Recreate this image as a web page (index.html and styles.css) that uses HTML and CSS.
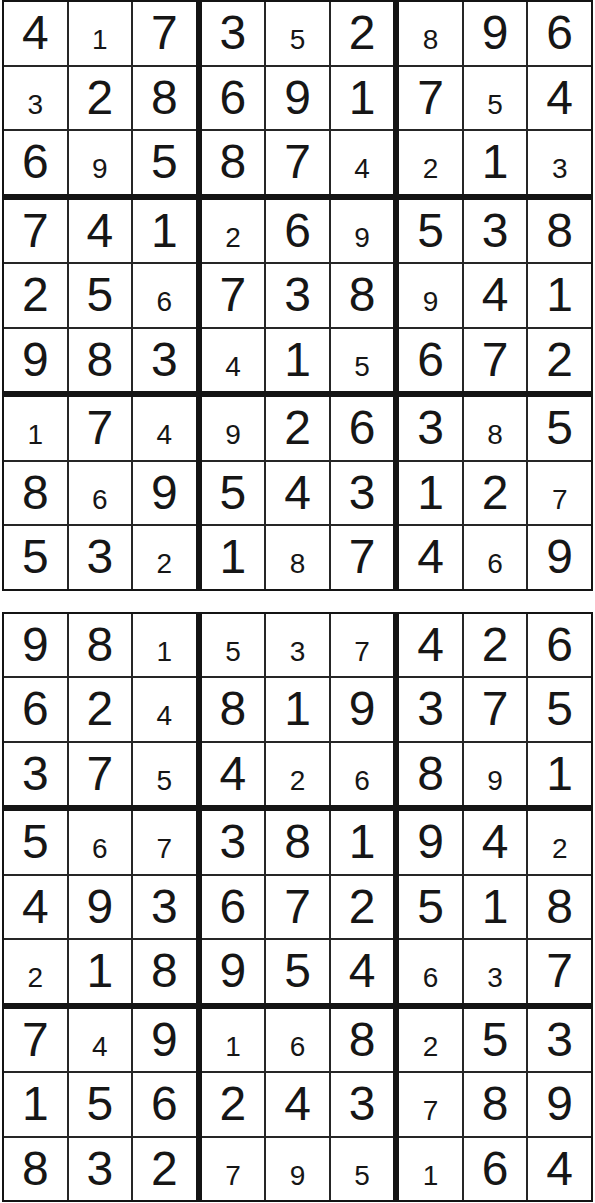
FILE: index.html
```html
<!DOCTYPE html>
<html lang="en">
<head>
  <meta charset="UTF-8" />
  <meta name="viewport" content="width=device-width, initial-scale=1.0"/>
  <title>Sudoku Solutions</title>
  <link rel="stylesheet" href="styles.css">
</head>
<body>
  <div class="page">
    <!-- puzzle 1 -->
    <div class="sudoku">
      <div class="box">
        <div class="cell">4</div><div class="cell"><span class="sm">1</span></div><div class="cell">7</div>
        <div class="cell"><span class="sm">3</span></div><div class="cell">2</div><div class="cell">8</div>
        <div class="cell">6</div><div class="cell"><span class="sm">9</span></div><div class="cell">5</div>
      </div>
      <div class="box">
        <div class="cell">3</div><div class="cell"><span class="sm">5</span></div><div class="cell">2</div>
        <div class="cell">6</div><div class="cell">9</div><div class="cell">1</div>
        <div class="cell">8</div><div class="cell">7</div><div class="cell"><span class="sm">4</span></div>
      </div>
      <div class="box">
        <div class="cell"><span class="sm">8</span></div><div class="cell">9</div><div class="cell">6</div>
        <div class="cell">7</div><div class="cell"><span class="sm">5</span></div><div class="cell">4</div>
        <div class="cell"><span class="sm">2</span></div><div class="cell">1</div><div class="cell"><span class="sm">3</span></div>
      </div>
      <div class="box">
        <div class="cell">7</div><div class="cell">4</div><div class="cell">1</div>
        <div class="cell">2</div><div class="cell">5</div><div class="cell"><span class="sm">6</span></div>
        <div class="cell">9</div><div class="cell">8</div><div class="cell">3</div>
      </div>
      <div class="box">
        <div class="cell"><span class="sm">2</span></div><div class="cell">6</div><div class="cell"><span class="sm">9</span></div>
        <div class="cell">7</div><div class="cell">3</div><div class="cell">8</div>
        <div class="cell"><span class="sm">4</span></div><div class="cell">1</div><div class="cell"><span class="sm">5</span></div>
      </div>
      <div class="box">
        <div class="cell">5</div><div class="cell">3</div><div class="cell">8</div>
        <div class="cell"><span class="sm">9</span></div><div class="cell">4</div><div class="cell">1</div>
        <div class="cell">6</div><div class="cell">7</div><div class="cell">2</div>
      </div>
      <div class="box">
        <div class="cell"><span class="sm">1</span></div><div class="cell">7</div><div class="cell"><span class="sm">4</span></div>
        <div class="cell">8</div><div class="cell"><span class="sm">6</span></div><div class="cell">9</div>
        <div class="cell">5</div><div class="cell">3</div><div class="cell"><span class="sm">2</span></div>
      </div>
      <div class="box">
        <div class="cell"><span class="sm">9</span></div><div class="cell">2</div><div class="cell">6</div>
        <div class="cell">5</div><div class="cell">4</div><div class="cell">3</div>
        <div class="cell">1</div><div class="cell"><span class="sm">8</span></div><div class="cell">7</div>
      </div>
      <div class="box">
        <div class="cell">3</div><div class="cell"><span class="sm">8</span></div><div class="cell">5</div>
        <div class="cell">1</div><div class="cell">2</div><div class="cell"><span class="sm">7</span></div>
        <div class="cell">4</div><div class="cell"><span class="sm">6</span></div><div class="cell">9</div>
      </div>
    </div>

    <!-- puzzle 2 -->
    <div class="sudoku second">
      <div class="box">
        <div class="cell">9</div><div class="cell">8</div><div class="cell"><span class="sm">1</span></div>
        <div class="cell">6</div><div class="cell">2</div><div class="cell"><span class="sm">4</span></div>
        <div class="cell">3</div><div class="cell">7</div><div class="cell"><span class="sm">5</span></div>
      </div>
      <div class="box">
        <div class="cell"><span class="sm">5</span></div><div class="cell"><span class="sm">3</span></div><div class="cell"><span class="sm">7</span></div>
        <div class="cell">8</div><div class="cell">1</div><div class="cell">9</div>
        <div class="cell">4</div><div class="cell"><span class="sm">2</span></div><div class="cell"><span class="sm">6</span></div>
      </div>
      <div class="box">
        <div class="cell">4</div><div class="cell">2</div><div class="cell">6</div>
        <div class="cell">3</div><div class="cell">7</div><div class="cell">5</div>
        <div class="cell">8</div><div class="cell"><span class="sm">9</span></div><div class="cell">1</div>
      </div>
      <div class="box">
        <div class="cell">5</div><div class="cell"><span class="sm">6</span></div><div class="cell"><span class="sm">7</span></div>
        <div class="cell">4</div><div class="cell">9</div><div class="cell">3</div>
        <div class="cell"><span class="sm">2</span></div><div class="cell">1</div><div class="cell">8</div>
      </div>
      <div class="box">
        <div class="cell">3</div><div class="cell">8</div><div class="cell">1</div>
        <div class="cell">6</div><div class="cell">7</div><div class="cell">2</div>
        <div class="cell">9</div><div class="cell">5</div><div class="cell">4</div>
      </div>
      <div class="box">
        <div class="cell">9</div><div class="cell">4</div><div class="cell"><span class="sm">2</span></div>
        <div class="cell">5</div><div class="cell">1</div><div class="cell">8</div>
        <div class="cell"><span class="sm">6</span></div><div class="cell"><span class="sm">3</span></div><div class="cell">7</div>
      </div>
      <div class="box">
        <div class="cell">7</div><div class="cell"><span class="sm">4</span></div><div class="cell">9</div>
        <div class="cell">1</div><div class="cell">5</div><div class="cell">6</div>
        <div class="cell">8</div><div class="cell">3</div><div class="cell">2</div>
      </div>
      <div class="box">
        <div class="cell"><span class="sm">1</span></div><div class="cell"><span class="sm">6</span></div><div class="cell">8</div>
        <div class="cell">2</div><div class="cell">4</div><div class="cell">3</div>
        <div class="cell"><span class="sm">7</span></div><div class="cell"><span class="sm">9</span></div><div class="cell"><span class="sm">5</span></div>
      </div>
      <div class="box">
        <div class="cell"><span class="sm">2</span></div><div class="cell">5</div><div class="cell">3</div>
        <div class="cell"><span class="sm">7</span></div><div class="cell">8</div><div class="cell">9</div>
        <div class="cell"><span class="sm">1</span></div><div class="cell">6</div><div class="cell">4</div>
      </div>
    </div>
  </div>
</body>
</html>
```

FILE: styles.css
```css
body { margin: 0; background-color: #fff; font-family: "Liberation Sans", Arial, sans-serif; color: #161616; }
.page { padding-left: 2px; }
.sudoku {
  display: grid;
  grid-template-columns: repeat(3, 1fr);
  grid-template-rows: repeat(3, 1fr);
  gap: 6px; padding: 2px;
  width: 591px; height: 591px;
  box-sizing: border-box;
  background-color: #141414;
}
.sudoku.second { margin-top: 21px; height: 590px; }
.box {
  display: grid;
  grid-template-columns: repeat(3, 1fr);
  grid-template-rows: repeat(3, 1fr);
  gap: 2px;
  background-color: #262626;
}
.cell {
  background-color: #fff;
  text-align: center;
  font-size: 48px;
  line-height: 61px;
  overflow: hidden;
}
.cell .sm { font-size: 28px; line-height: 1; }
```
